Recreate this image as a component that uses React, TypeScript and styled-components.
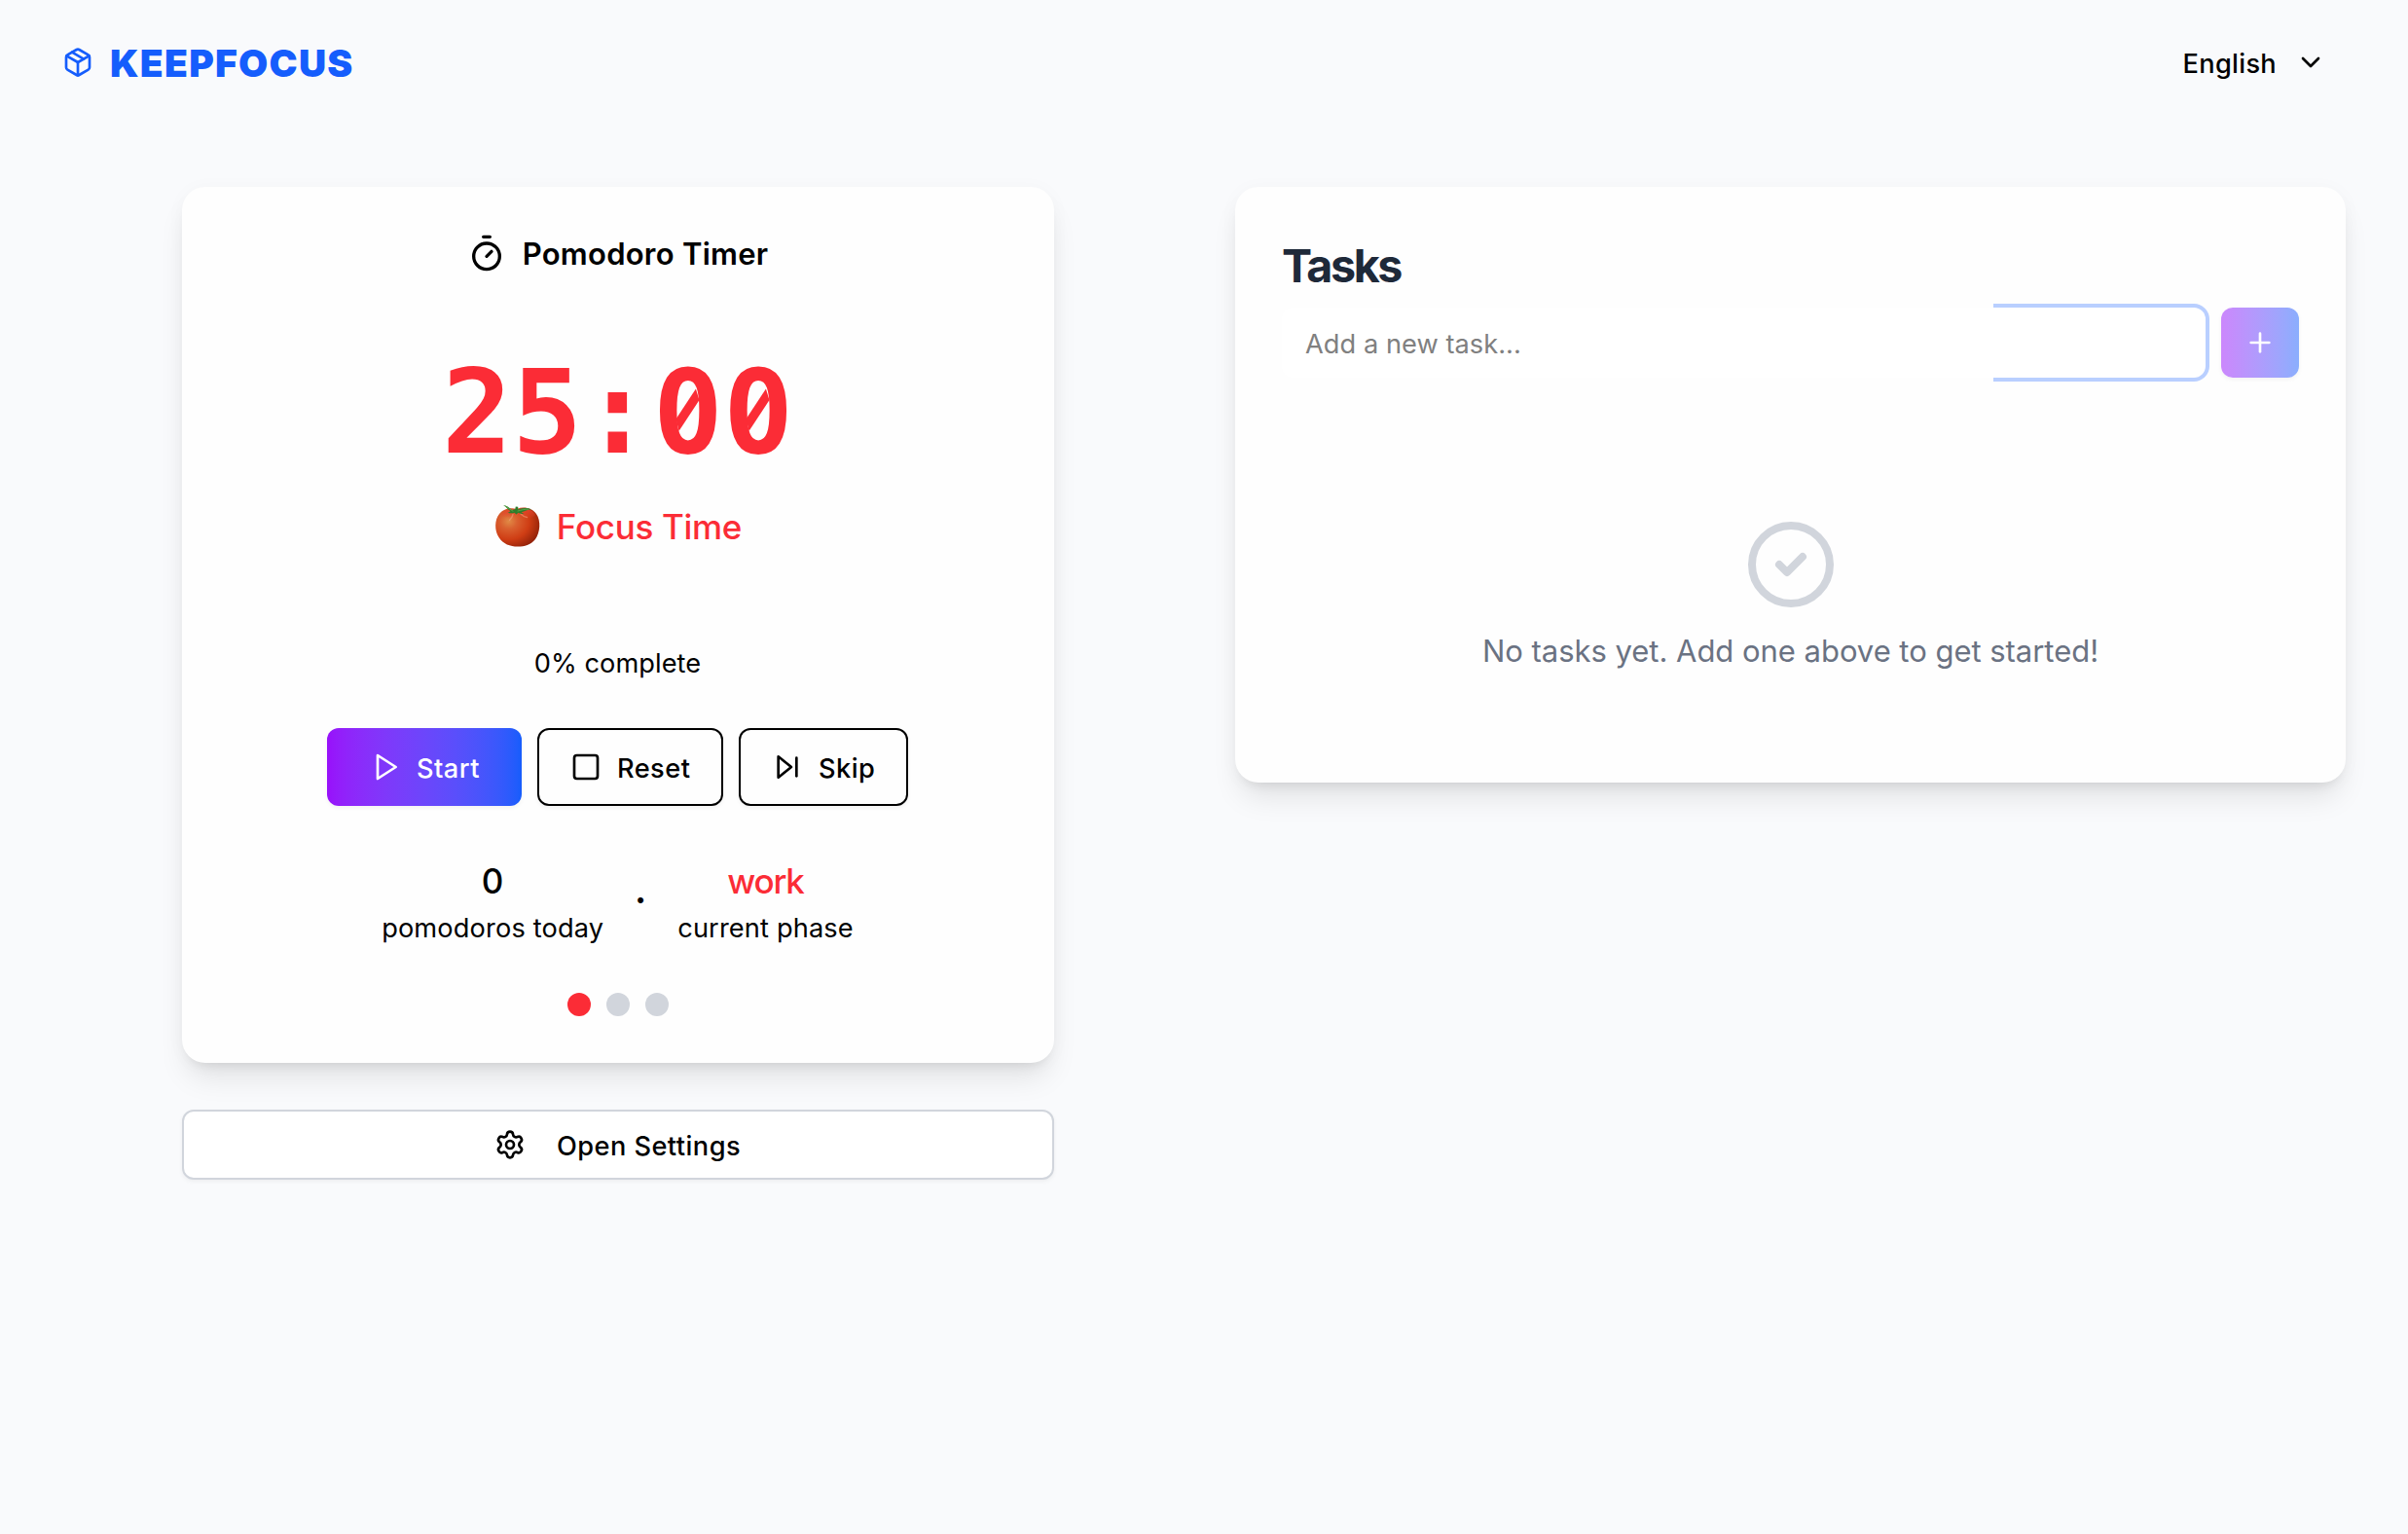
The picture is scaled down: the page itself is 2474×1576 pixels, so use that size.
import React from "react";
import styled, { createGlobalStyle, css } from "styled-components";
import {
  ChevronDown,
  Package,
  Plus,
  Settings,
  Square,
  Timer,
} from "lucide-react";

const colors = {
  page: "#f9fafc",
  card: "#fefefe",
  brand: "#155dfc",
  work: "#fb2c36",
  heading: "#1e2939",
  muted: "#6a7282",
  line: "#d1d5dc",
};

const GlobalStyle = createGlobalStyle`
  *, *::before, *::after { box-sizing: border-box; }
  body {
    margin: 0;
    background: ${colors.page};
    color: #000;
    font-family: Inter, "Liberation Sans", sans-serif;
    font-size: 27.2px;
  }
`;

const Page = styled.div`
  display: flex;
  flex-direction: column;
  min-height: 1576px;
`;

const Header = styled.header`
  display: flex;
  align-items: center;
  justify-content: space-between;
  height: 128px;
  padding: 0 84px 0 64px;
`;

const Brand = styled.div`
  display: flex;
  align-items: center;
  gap: 17px;
  color: ${colors.brand};
`;

const BrandName = styled.span`
  font-size: 39px;
  font-weight: 900;
  line-height: 56px;
  letter-spacing: 1.25px;
  padding-top: 1px;
`;

const Language = styled.button`
  display: flex;
  align-items: center;
  gap: 19px;
  padding: 0;
  border: 0;
  background: none;
  color: inherit;
  font: 500 27.2px/40px Inter, sans-serif;
  letter-spacing: 0.3px;

  span {
    padding-top: 3px;
  }
`;

const Columns = styled.main`
  display: grid;
  grid-template-columns: 1fr 1fr;
  gap: 64px;
  align-items: start;
  padding: 64px;
`;

const TimerColumn = styled.section`
  display: flex;
  flex-direction: column;
  gap: 48px;
  width: 896px;
  justify-self: center;
`;

const cardSurface = css`
  border-radius: 24px;
  background: ${colors.card};
  box-shadow:
    0 20px 30px -6px rgba(0, 0, 0, 0.1),
    0 8px 12px -8px rgba(0, 0, 0, 0.1),
    0 2px 20px rgba(0, 0, 0, 0.03);
`;

const TimerCard = styled.div`
  ${cardSurface}
  display: flex;
  flex-direction: column;
  align-items: center;
  height: 900px;
  padding: 48px;
`;

const TimerTitle = styled.h2`
  display: flex;
  align-items: center;
  gap: 17px;
  height: 40px;
  margin: 0;
  font-size: 31px;
  font-weight: 600;
  line-height: 40px;
  letter-spacing: 0.25px;

  span {
    padding-top: 2px;
  }
`;

const Clock = styled.div`
  display: flex;
  margin-top: 84px;
  color: ${colors.work};
  font: 700 120px/120px "DejaVu Sans Mono", monospace;
`;

const ZeroCell = styled.span`
  position: relative;

  svg {
    position: absolute;
    left: 0;
    top: 0;
  }
`;

const Phase = styled.div`
  display: flex;
  align-items: center;
  gap: 16px;
  height: 56px;
  margin-top: 29px;
  padding-left: 1px;
  color: ${colors.work};
  font-size: 35px;
  font-weight: 500;
  letter-spacing: -0.3px;
`;

const Percent = styled.div`
  margin-top: 93px;
  line-height: 40px;
  letter-spacing: 0.06px;
`;

const Actions = styled.div`
  display: flex;
  gap: 16px;
  margin-top: 46px;
`;

const ActionButton = styled.button<{ $width: number; $primary?: boolean }>`
  display: flex;
  align-items: center;
  gap: 16px;
  width: ${(p) => p.$width}px;
  height: 80px;
  padding: 0 0 0 ${(p) => (p.$primary ? 44 : 32)}px;
  border-radius: 12px;
  border: ${(p) => (p.$primary ? "0" : "2px solid #000")};
  color: ${(p) => (p.$primary ? "#fff" : "#000")};
  background: ${(p) =>
    p.$primary
      ? "linear-gradient(to right in oklab, #9810fa, #155dfc)"
      : colors.card};
  box-shadow: 0 2px 4px rgba(0, 0, 0, 0.05);
  font: 500 27.2px/40px Inter, sans-serif;
  letter-spacing: 0.45px;

  span {
    padding-top: 3px;
  }
`;

const Stats = styled.div`
  display: flex;
  align-items: center;
  gap: 32px;
  margin-top: 49px;
`;

const Stat = styled.div`
  display: flex;
  flex-direction: column;
  align-items: center;
`;

const StatValue = styled.span<{ $accent?: boolean }>`
  font-size: 35px;
  font-weight: 500;
  line-height: 56px;
  letter-spacing: ${(p) => (p.$accent ? "-1.2px" : "0")};
  color: ${(p) => (p.$accent ? colors.work : "inherit")};
`;

const StatLabel = styled.span`
  height: 40px;
  padding-top: 1px;
  line-height: 40px;
  letter-spacing: 0.15px;
`;

const Separator = styled.span`
  width: 12px;
  font-size: 19px;
  line-height: 40px;
  text-align: center;
`;

const Rounds = styled.div`
  display: flex;
  gap: 16px;
  margin-top: 47px;
`;

const Round = styled.span<{ $active?: boolean }>`
  width: 24px;
  height: 24px;
  border-radius: 50%;
  background: ${(p) => (p.$active ? colors.work : colors.line)};
`;

const SettingsButton = styled.button`
  display: flex;
  align-items: center;
  justify-content: center;
  gap: 32px;
  height: 72px;
  padding: 0;
  border: 2px solid ${colors.line};
  border-radius: 12px;
  background: #fff;
  color: #000;
  box-shadow: 0 2px 4px rgba(0, 0, 0, 0.05);
  font: 500 27.2px/40px Inter, sans-serif;
  letter-spacing: 0.45px;

  span {
    padding-top: 3px;
  }
`;

const TasksCard = styled.section`
  ${cardSurface}
  display: flex;
  flex-direction: column;
  height: 612px;
  padding: 48px;
`;

const TasksTitle = styled.h2`
  height: 64px;
  margin: 0;
  padding-top: 1px;
  color: ${colors.heading};
  font-size: 46.6px;
  font-weight: 700;
  line-height: 64px;
  letter-spacing: -2.4px;
`;

const AddRow = styled.form`
  display: flex;
  gap: 16px;
  margin-top: 12px;
`;

const Field = styled.div`
  position: relative;
  flex: 1;
  height: 72px;
  border-radius: 12px;
  background: #fff;

  &::after {
    content: "";
    position: absolute;
    top: -4px;
    right: -4px;
    bottom: -4px;
    left: 731px;
    border: 4px solid #b9cfff;
    border-left: 0;
    border-radius: 0 16px 16px 0;
    pointer-events: none;
  }
`;

const TaskInput = styled.input`
  width: 100%;
  height: 72px;
  padding: 2px 24px 0;
  border: 0;
  outline: 0;
  background: none;
  color: #000;
  font: 400 27.2px/40px Inter, sans-serif;
  letter-spacing: 0.05px;

  &::placeholder {
    color: #808080;
    opacity: 1;
  }
`;

const AddButton = styled.button`
  display: flex;
  align-items: center;
  justify-content: center;
  width: 80px;
  height: 72px;
  padding: 0;
  border: 0;
  border-radius: 12px;
  color: #fff;
  background: linear-gradient(to right in oklab, #cb87fc, #8aaefd);
  box-shadow: 0 2px 4px rgba(0, 0, 0, 0.05);
`;

const Empty = styled.div`
  display: flex;
  flex-direction: column;
  align-items: center;
  gap: 17px;
  padding-top: 144px;
  color: ${colors.muted};
  font-size: 31px;
  line-height: 48px;
  letter-spacing: -0.03px;
`;

function PlayIcon() {
  return (
    <svg width="32" height="32" viewBox="0 0 24 24" fill="none" stroke="currentColor" strokeWidth="2" strokeLinecap="round" strokeLinejoin="round">
      <polygon points="6 3 20 12 6 21 6 3" />
    </svg>
  );
}

function SkipIcon() {
  return (
    <svg width="32" height="32" viewBox="0 0 24 24" fill="none" stroke="currentColor" strokeWidth="2" strokeLinecap="round" strokeLinejoin="round">
      <polygon points="5 4 15 12 5 20 5 4" />
      <line x1="19" y1="5" x2="19" y2="19" />
    </svg>
  );
}

function EmptyIcon() {
  return (
    <svg width="96" height="96" viewBox="0 0 24 24" fill="none" stroke={colors.line} strokeWidth="2" strokeLinecap="round" strokeLinejoin="round">
      <circle cx="12" cy="12" r="10" />
      <path d="m9 12 2 2 4-4" />
    </svg>
  );
}

function Tomato() {
  return (
    <svg width="48" height="56" viewBox="0 0 48 56">
      <defs>
        <radialGradient id="skin" cx="0.3" cy="0.35" r="0.78">
          <stop offset="0" stopColor="#e08a45" />
          <stop offset="0.25" stopColor="#d9602f" />
          <stop offset="0.6" stopColor="#cf3d14" />
          <stop offset="1" stopColor="#8c1f08" />
        </radialGradient>
        <linearGradient id="glow" x1="0" y1="0" x2="0" y2="1">
          <stop offset="0" stopColor="#e8452f" stopOpacity="0.9" />
          <stop offset="1" stopColor="#e8452f" stopOpacity="0" />
        </linearGradient>
      </defs>
      <path d="M23 10C30 7 39 9 43 15C48 22 47 34 42 41C37 47 31 48.5 24 48.5C16 48.5 9 46 4.500 39C0 32 0 21 5 15C9 9.500 17 8 23 10Z" fill="url(#skin)" />
      <path d="M23 11C30 8 39 10 42 16C38 22 28 20 23 14C18 20 9 20 7 16C11 10 17 9 23 11Z" fill="url(#glow)" />
      <path d="M19 15.500C18.500 18 17 20 15.500 21.500M27 15C29 17 31 18 33.500 18.500" stroke="#f3a07c" strokeWidth="1.400" strokeLinecap="round" fill="none" opacity="0.55" />
      <path d="M9 6C12 6 15.500 8.500 18 11C19.500 10.500 20.500 10.200 21.300 10L21.800 7.500L24.200 7.800L24.500 10.500C29 8.800 34 8.500 38 10.300C34 10.500 31 12.500 27.500 13.200C28.500 14 29.500 14.500 30.500 15C28 15.200 26 14.500 24.500 13.800L22.500 15.500L20.500 13.800C18.500 14.500 16.500 14.500 13.500 13.800C15 13.300 15.800 12.800 16.500 12C13.500 10.500 12 7.500 9 6Z" fill="#2f7d2b" />
      <path d="M11 7C14 8.500 16 10.500 19 12.200M24 12C28 10.800 32 10 35 10.200" stroke="#5da84a" strokeWidth="0.900" fill="none" strokeLinecap="round" />
    </svg>
  );
}

function Zero() {
  return (
    <ZeroCell>
      0
      <svg width="72" height="120" viewBox="0 0 72 120">
        <ellipse cx="36" cy="57.500" rx="10" ry="20" fill={colors.card} />
        <polygon points="23.500,66.600 43.900,35.500 47.500,46.900 26.600,78.800" fill={colors.work} />
      </svg>
    </ZeroCell>
  );
}

export default function App() {
  return (
    <Page>
      <GlobalStyle />
      <Header>
        <Brand>
          <Package size={32} />
          <BrandName>KEEPFOCUS</BrandName>
        </Brand>
        <Language>
          <span>English</span>
          <ChevronDown size={32} />
        </Language>
      </Header>
      <Columns>
        <TimerColumn>
          <TimerCard>
            <TimerTitle>
              <Timer size={40} />
              <span>Pomodoro Timer</span>
            </TimerTitle>
            <Clock>
              <span>25:</span>
              <Zero />
              <Zero />
            </Clock>
            <Phase>
              <Tomato />
              <span>Focus Time</span>
            </Phase>
            <Percent>0% complete</Percent>
            <Actions>
              <ActionButton $width={200} $primary>
                <PlayIcon />
                <span>Start</span>
              </ActionButton>
              <ActionButton $width={191}>
                <Square size={32} />
                <span>Reset</span>
              </ActionButton>
              <ActionButton $width={174}>
                <SkipIcon />
                <span>Skip</span>
              </ActionButton>
            </Actions>
            <Stats>
              <Stat>
                <StatValue>0</StatValue>
                <StatLabel>pomodoros today</StatLabel>
              </Stat>
              <Separator>•</Separator>
              <Stat>
                <StatValue $accent>work</StatValue>
                <StatLabel>current phase</StatLabel>
              </Stat>
            </Stats>
            <Rounds>
              <Round $active />
              <Round />
              <Round />
            </Rounds>
          </TimerCard>
          <SettingsButton>
            <Settings size={32} />
            <span>Open Settings</span>
          </SettingsButton>
        </TimerColumn>
        <TasksCard>
          <TasksTitle>Tasks</TasksTitle>
          <AddRow>
            <Field>
              <TaskInput placeholder="Add a new task..." />
            </Field>
            <AddButton type="button">
              <Plus size={32} />
            </AddButton>
          </AddRow>
          <Empty>
            <EmptyIcon />
            <span>No tasks yet. Add one above to get started!</span>
          </Empty>
        </TasksCard>
      </Columns>
    </Page>
  );
}
